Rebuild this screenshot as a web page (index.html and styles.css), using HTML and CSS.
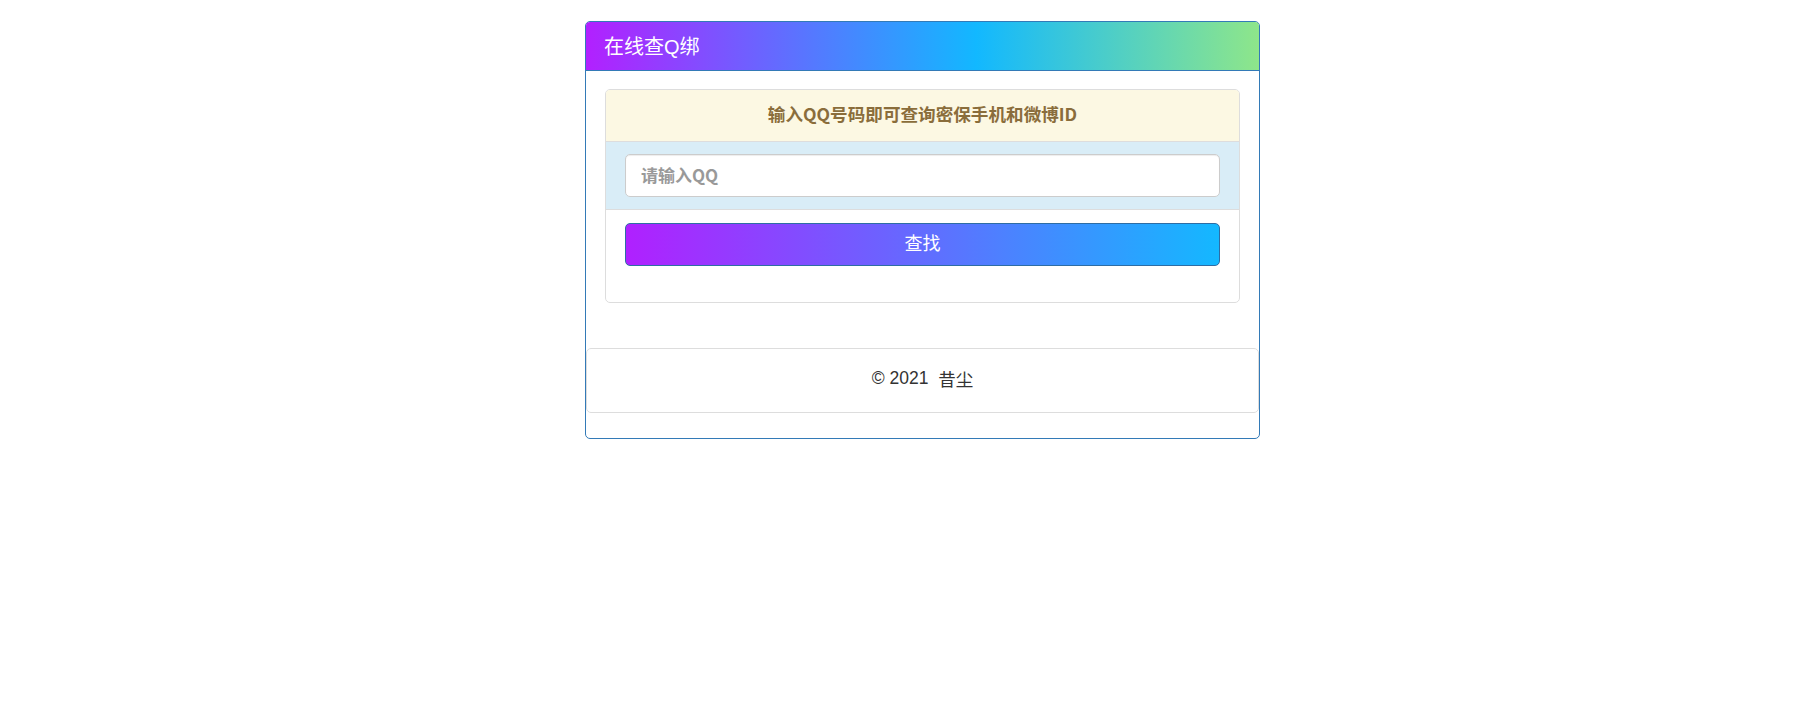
FILE: index.html
```html
<!DOCTYPE html>
<html lang="zh-CN">
<head>
    <meta charset="UTF-8">
    <meta name="viewport" content="width=device-width, initial-scale=1.0">
    <title>在线查Q绑</title>
    <link rel="stylesheet" href="styles.css">
</head>
<body>
    <div class="panel">
        <div class="panel-heading">在线查Q绑</div>

        <div class="panel-body">
            <div class="query-box">
                <div class="query-title">输入QQ号码即可查询密保手机和微博ID</div>
                <div class="query-input">
                    <input type="text" id="qq" placeholder="请输入QQ" aria-label="QQ号码">
                </div>
                <div class="query-action">
                    <button class="btn-search" id="search">查找</button>
                </div>
            </div>
        </div>

        <div class="panel-footer">© 2021 &nbsp;<a href="#">昔尘</a></div>
    </div>
</body>
</html>
```

FILE: styles.css
```css
:root {
    --primary-color: #337ab7;
    --border-color: #dddddd;
    --warning-bg: #fcf8e3;
    --warning-text: #8a6d3b;
    --info-bg: #d9edf7;
}

* {
    box-sizing: border-box;
}

body {
    margin: 0;
    font-family: "Liberation Sans", "Noto Sans CJK SC", sans-serif;
    color: #333333;
    background-color: #ffffff;
}

.panel {
    width: 675px;
    margin: 21px 0 0 585px;
    border: 1px solid var(--primary-color);
    border-radius: 5px;
    overflow: hidden;
}

.panel-heading {
    display: flex;
    align-items: center;
    height: 49px;
    padding: 0 18px 2px;
    border-bottom: 1px solid var(--primary-color);
    background: linear-gradient(to right, #b220ff 0%, #12b8ff 58%, #8ee68a 100%);
    color: #ffffff;
    font-family: "Liberation Sans", "Noto Sans CJK SC", sans-serif;
    font-size: 20px;
}

.panel-body {
    padding: 18px 19px 45px;
}

.query-box {
    border: 1px solid var(--border-color);
    border-radius: 5px;
    overflow: hidden;
}

.query-title {
    display: flex;
    align-items: center;
    justify-content: center;
    height: 52px;
    padding-bottom: 4px;
    border-bottom: 1px solid var(--border-color);
    background-color: var(--warning-bg);
    color: var(--warning-text);
    font-family: "Noto Sans CJK SC", sans-serif;
    font-weight: bold;
    font-size: 17.6px;
}

.query-input {
    height: 68px;
    padding: 12px 19px;
    border-bottom: 1px solid var(--border-color);
    background-color: var(--info-bg);
}

input {
    width: 100%;
    height: 43px;
    padding: 0 15px 2px;
    border: 1px solid #cccccc;
    border-radius: 5px;
    box-shadow: inset 0 1px 1px rgba(0, 0, 0, 0.075);
    font-family: "Noto Sans CJK SC", sans-serif;
    font-size: 17px;
    font-weight: bold;
    color: #555555;
    background-color: #ffffff;
}

input::placeholder {
    color: #999999;
}

input:focus {
    outline: none;
    border-color: #66afe9;
}

.query-action {
    padding: 13px 19px 36px;
}

.btn-search {
    display: block;
    width: 100%;
    height: 43px;
    padding: 0 0 5px;
    border: 1px solid #2e6da4;
    border-radius: 5px;
    background: linear-gradient(to right, #b020ff 0%, #14b8ff 100%);
    color: #ffffff;
    font-family: "Noto Sans CJK SC", sans-serif;
    font-size: 18px;
    line-height: 1;
    cursor: pointer;
}

.panel-footer {
    display: flex;
    align-items: center;
    justify-content: center;
    height: 65px;
    margin-bottom: 25px;
    padding-bottom: 5px;
    border: 1px solid var(--border-color);
    border-radius: 5px;
    font-size: 17.5px;
    color: #333333;
}

.panel-footer a {
    color: #333333;
    text-decoration: none;
}
```
